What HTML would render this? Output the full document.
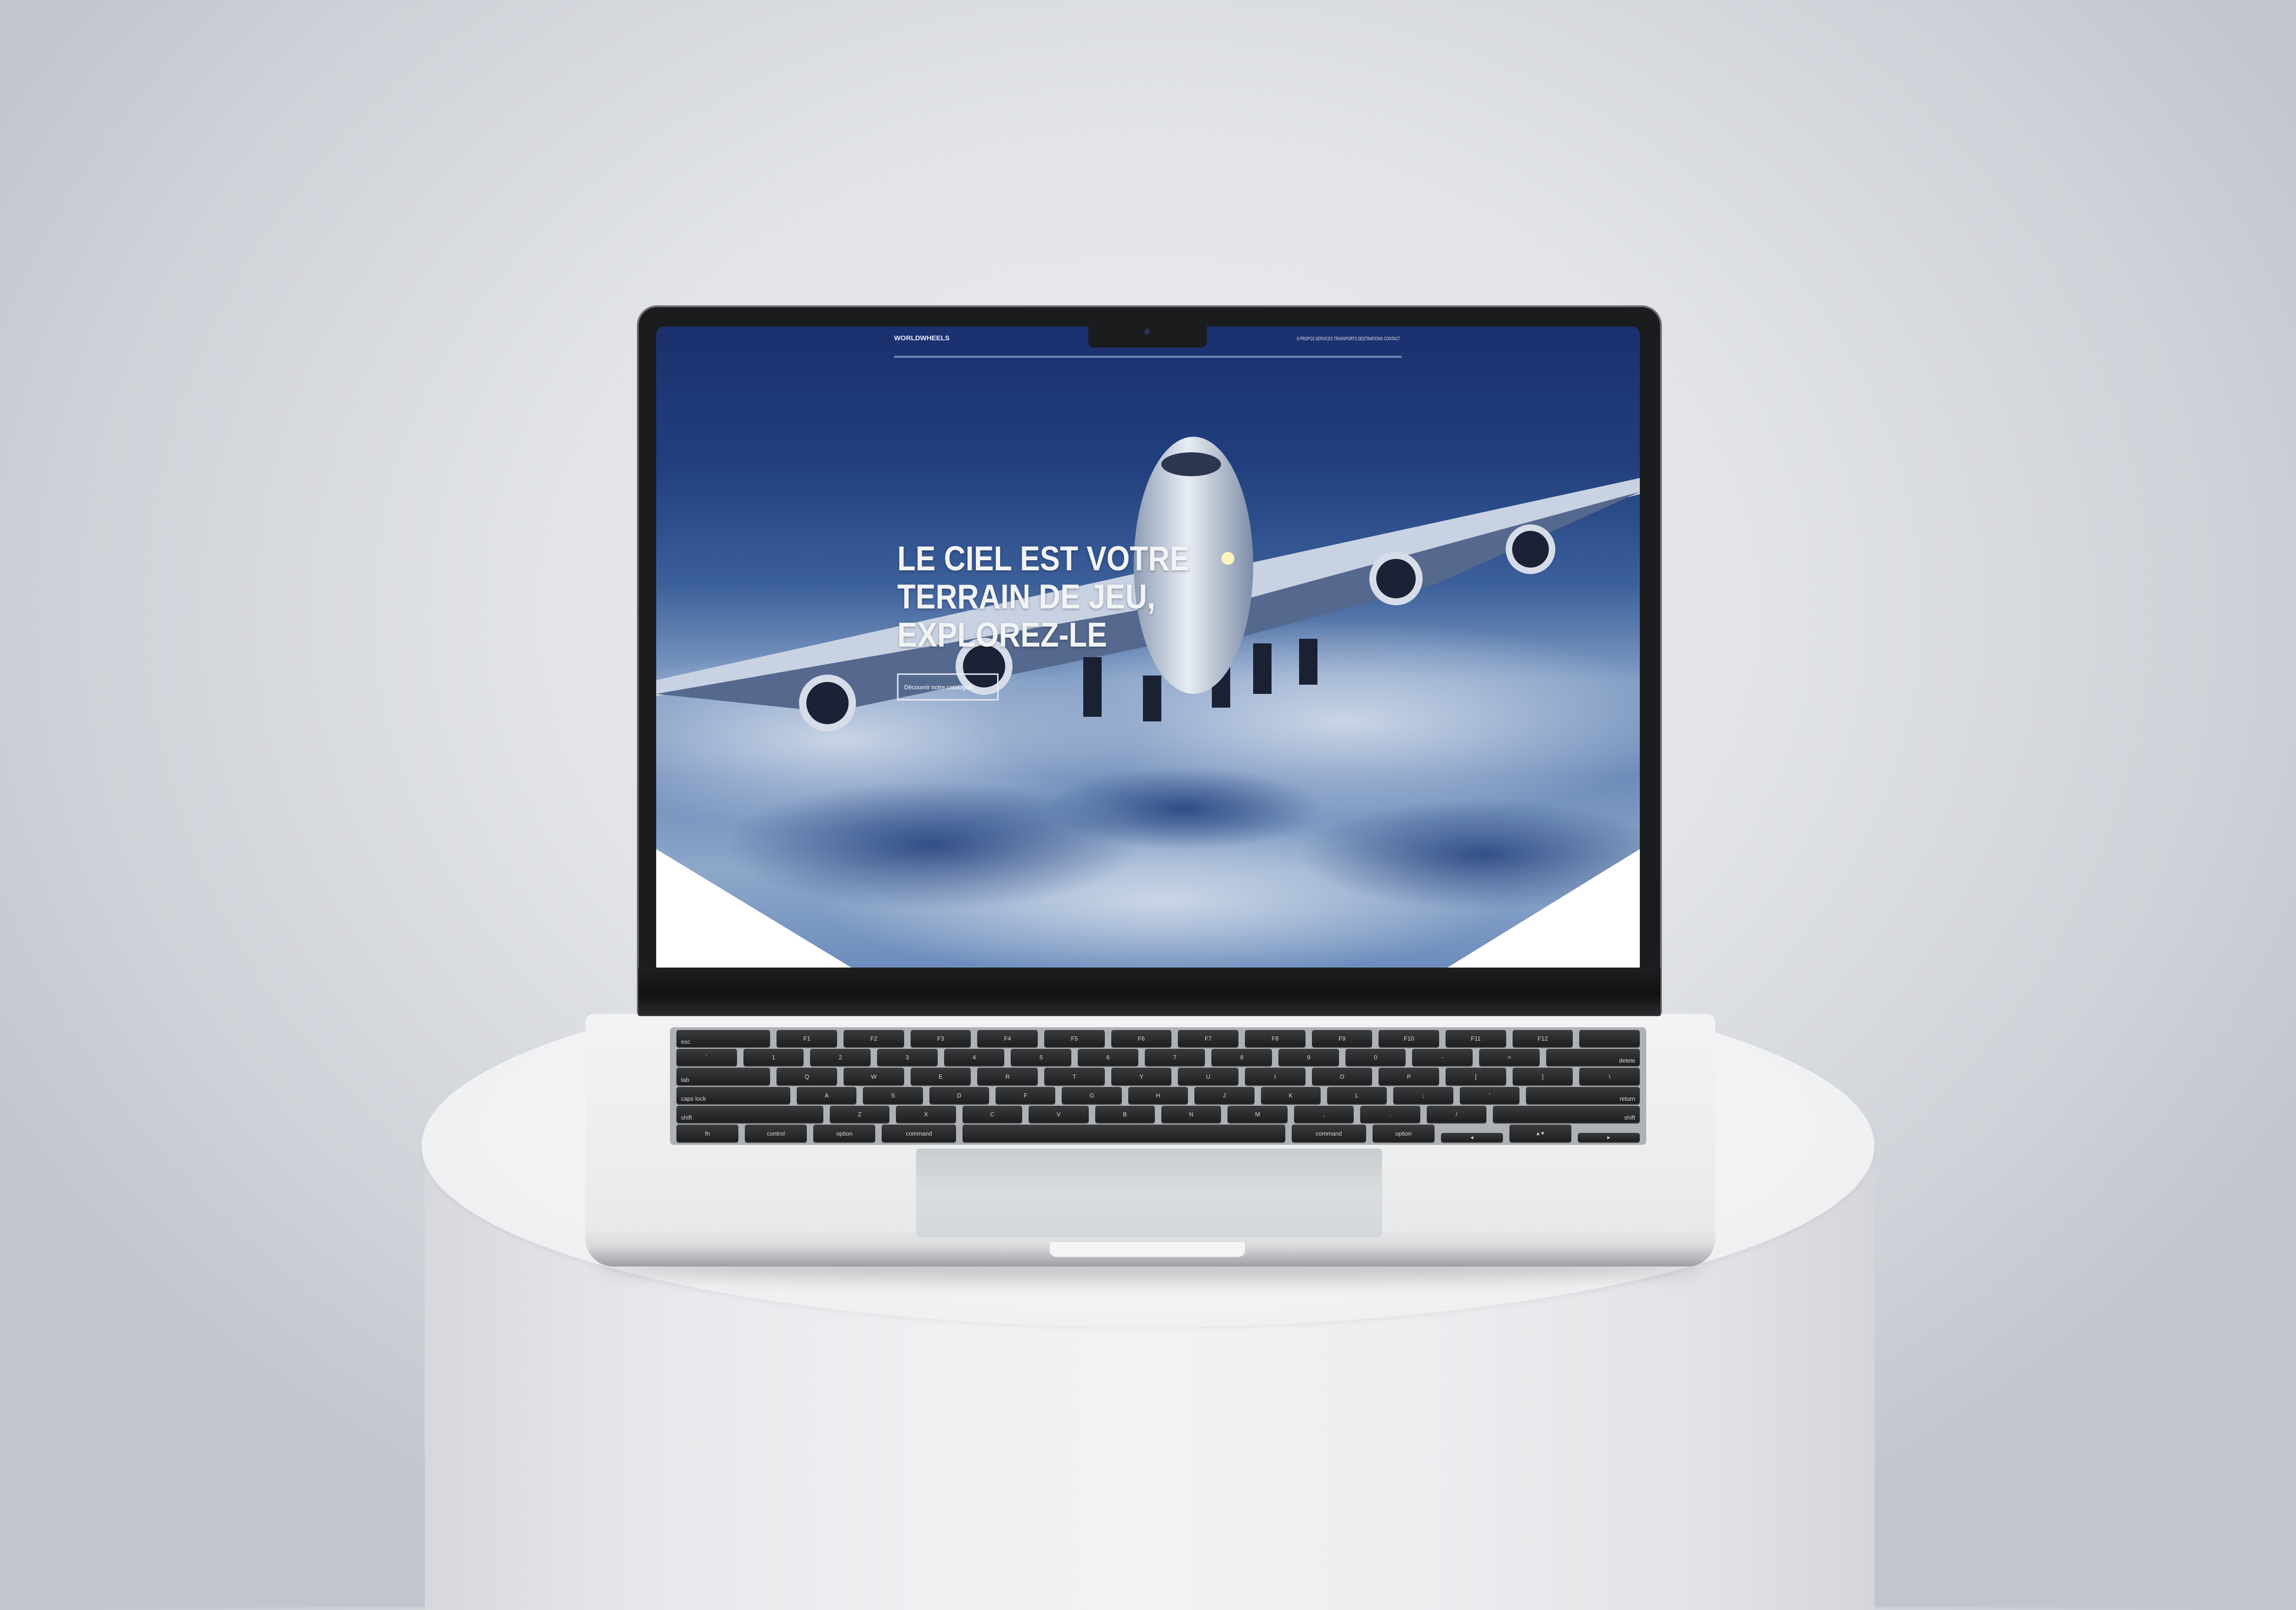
<!DOCTYPE html>
<html><head><meta charset="utf-8">
<style>
*{margin:0;padding:0;box-sizing:border-box}
body{width:5000px;height:3500px;overflow:hidden;position:relative;background:radial-gradient(ellipse 2900px 2300px at 50% 38%,#eceef1 0%,#e2e4e8 45%,#cfd2d8 80%,#c2c5cc 100%);font-family:"Liberation Sans",sans-serif}
.abs{position:absolute}
.ped{left:925px;top:2496px;width:3157px;height:1010px;background:linear-gradient(90deg,#d6d8dd 0%,#e6e8eb 15%,#eff0f2 35%,#f1f2f4 50%,#eceef0 68%,#e1e3e6 88%,#d4d6db 100%)}
.pedtop{left:918px;top:2100px;width:3164px;height:790px;border-radius:50%;background:radial-gradient(ellipse at 50% 45%,#f7f8f9 0%,#f2f3f5 55%,#eceef0 85%,#e4e6e9 100%);box-shadow:0 6px 10px rgba(0,0,0,.04)}
.lid{left:1387px;top:665px;width:2232px;height:1548px;border-radius:44px 44px 10px 10px;background:#1b1c1e;border:4px solid #6a6c70}
.screen{left:1429px;top:711px;width:2142px;height:1396px;overflow:hidden;border-radius:18px 18px 0 0;background:linear-gradient(180deg,#1b2f6e 0%,#22407e 22%,#3b5f9a 40%,#7f9bc3 55%,#6d8bb9 70%,#8ea8ca 85%,#6c8cbc 100%)}
.hinge{left:1390px;top:2107px;width:2226px;height:105px;background:linear-gradient(180deg,#1e1f21 0%,#111 55%,#2b2c2e 100%)}
.base{left:1275px;top:2208px;width:2460px;height:550px;border-radius:18px 18px 60px 60px;background:linear-gradient(180deg,#f2f3f4 0%,#eceded 60%,#e8e9eb 85%,#d9dadc 92%,#9c9ea2 100%)}
.well{left:1459px;top:2237px;width:2126px;height:256px;border-radius:8px;background:#aeb1b5;padding:6px 14px;display:flex;flex-direction:column;gap:4px}
.row{display:flex;gap:14px;height:38px}
.k{flex:1;background:linear-gradient(180deg,#3a3b3d,#1d1e20);border-radius:5px;color:#d8d8d8;font-size:13px;display:flex;align-items:center;justify-content:center;box-shadow:0 2px 0 #555}
.k.l{justify-content:flex-start;align-items:flex-end;padding:0 10px 4px}
.k.r{justify-content:flex-end;align-items:flex-end;padding:0 10px 4px}
.pad{left:1995px;top:2501px;width:1015px;height:193px;border-radius:8px;background:linear-gradient(180deg,#c8cbcf,#dadde0 50%,#d4d7da);}
.notch2{left:2286px;top:2705px;width:425px;height:32px;border-radius:0 0 14px 14px;background:#f4f5f6}
.h{left:1954px;top:1175px;color:#f2f3f6;font-weight:bold;font-size:75px;line-height:83px;transform:scaleX(0.87);transform-origin:left top;white-space:nowrap;text-shadow:0 2px 6px rgba(0,0,0,.3)}
</style></head><body>
<div class="abs ped"></div>
<div class="abs pedtop"></div>
<div class="abs" style="left:1300px;top:2730px;width:2410px;height:60px;border-radius:50%;background:rgba(0,0,0,.18);filter:blur(18px)"></div>
<div class="abs base"></div>
<div class="abs well">
<div class="row"><div class="k l" style="flex:1.4">esc</div><div class="k">F1</div><div class="k">F2</div><div class="k">F3</div><div class="k">F4</div><div class="k">F5</div><div class="k">F6</div><div class="k">F7</div><div class="k">F8</div><div class="k">F9</div><div class="k">F10</div><div class="k">F11</div><div class="k">F12</div><div class="k"></div></div>
<div class="row"><div class="k">`</div><div class="k">1</div><div class="k">2</div><div class="k">3</div><div class="k">4</div><div class="k">5</div><div class="k">6</div><div class="k">7</div><div class="k">8</div><div class="k">9</div><div class="k">0</div><div class="k">-</div><div class="k">=</div><div class="k r" style="flex:1.4">delete</div></div>
<div class="row"><div class="k l" style="flex:1.4">tab</div><div class="k">Q</div><div class="k">W</div><div class="k">E</div><div class="k">R</div><div class="k">T</div><div class="k">Y</div><div class="k">U</div><div class="k">I</div><div class="k">O</div><div class="k">P</div><div class="k">[</div><div class="k">]</div><div class="k">\</div></div>
<div class="row"><div class="k l" style="flex:1.75">caps lock</div><div class="k">A</div><div class="k">S</div><div class="k">D</div><div class="k">F</div><div class="k">G</div><div class="k">H</div><div class="k">J</div><div class="k">K</div><div class="k">L</div><div class="k">;</div><div class="k">'</div><div class="k r" style="flex:1.75">return</div></div>
<div class="row"><div class="k l" style="flex:2.3">shift</div><div class="k">Z</div><div class="k">X</div><div class="k">C</div><div class="k">V</div><div class="k">B</div><div class="k">N</div><div class="k">M</div><div class="k">,</div><div class="k">.</div><div class="k">/</div><div class="k r" style="flex:2.3">shift</div></div>
<div class="row"><div class="k">fn</div><div class="k">control</div><div class="k">option</div><div class="k" style="flex:1.2">command</div><div class="k" style="flex:5.2"></div><div class="k" style="flex:1.2">command</div><div class="k">option</div><div class="k" style="height:20px;margin-top:18px">◂</div><div class="k">▴ ▾</div><div class="k" style="height:20px;margin-top:18px">▸</div></div>
</div>
<div class="abs pad"></div>
<div class="abs notch2"></div>
<div class="abs lid"></div>
<div class="abs hinge"></div>
<div class="abs screen">
<svg width="2142" height="1396" viewBox="0 0 2142 1396" style="position:absolute;left:0;top:0">
<defs>
<radialGradient id="c1" cx="50%" cy="50%" r="50%"><stop offset="0" stop-color="#d3dceb" stop-opacity=".9"/><stop offset="1" stop-color="#d3dceb" stop-opacity="0"/></radialGradient>
<radialGradient id="c2" cx="50%" cy="50%" r="50%"><stop offset="0" stop-color="#1f3a78" stop-opacity=".8"/><stop offset="1" stop-color="#1f3a78" stop-opacity="0"/></radialGradient>
<linearGradient id="fus" x1="0" x2="1"><stop offset="0" stop-color="#8e9db5"/><stop offset=".45" stop-color="#e8edf3"/><stop offset="1" stop-color="#7e8ea8"/></linearGradient>
</defs>
<ellipse cx="400" cy="900" rx="650" ry="200" fill="url(#c1)"/>
<ellipse cx="1500" cy="860" rx="750" ry="220" fill="url(#c1)"/>
<ellipse cx="1100" cy="1250" rx="750" ry="170" fill="url(#c1)"/>
<ellipse cx="1800" cy="1150" rx="400" ry="120" fill="url(#c2)"/>
<ellipse cx="600" cy="1130" rx="450" ry="140" fill="url(#c2)"/>
<ellipse cx="1150" cy="1050" rx="300" ry="90" fill="url(#c2)"/>
<polygon points="0,770 1080,530 1150,600 0,805" fill="#c8d2e2"/>
<polygon points="0,800 1150,600 1150,680 380,840" fill="#55698f"/>
<polygon points="2142,330 1270,520 1260,600 2142,365" fill="#c8d2e2"/>
<polygon points="2142,360 1260,600 1260,680 1700,560" fill="#55698f"/>
<g fill="#1a2133">
<rect x="930" y="720" width="40" height="130"/><rect x="1060" y="760" width="40" height="100"/><rect x="1210" y="740" width="40" height="90"/><rect x="1300" y="690" width="40" height="110"/><rect x="1400" y="680" width="40" height="100"/>
</g>
<ellipse cx="1170" cy="520" rx="130" ry="280" fill="url(#fus)"/>
<ellipse cx="1165" cy="300" rx="65" ry="26" fill="#2c3650"/>
<g fill="#d6dde8"><circle cx="373" cy="820" r="62"/><circle cx="714" cy="740" r="62"/><circle cx="1611" cy="549" r="58"/><circle cx="1904" cy="485" r="54"/></g>
<g fill="#1b2235"><circle cx="373" cy="820" r="46"/><circle cx="714" cy="740" r="46"/><circle cx="1611" cy="549" r="43"/><circle cx="1904" cy="485" r="40"/></g>
<circle cx="1245" cy="505" r="14" fill="#fff4c0"/>
<line x1="518" y1="66" x2="1623" y2="66" stroke="#6a7fb0" stroke-width="5"/>
<text x="518" y="30" fill="#e8ecf5" font-size="15" font-weight="bold" font-family="Liberation Sans">WORLDWHEELS</text>
<text x="1395" y="30" fill="#dfe5f2" font-size="11" font-family="Liberation Sans" textLength="225" lengthAdjust="spacingAndGlyphs">À PROPOS   SERVICES   TRANSPORTS   DESTINATIONS   CONTACT</text>
<rect x="526" y="757" width="218" height="56" fill="none" stroke="#e8ecf4" stroke-width="3"/>
<text x="540" y="790" fill="#fff" font-size="13" font-family="Liberation Sans">Découvrir notre catalogue</text>
<polygon points="0,1138 0,1396 425,1396" fill="#fff"/>
<polygon points="2142,1138 2142,1396 1723,1396" fill="#fff"/>
</svg>
</div>
<div class="abs" style="left:2370px;top:711px;width:258px;height:46px;background:#1b1c1e;border-radius:0 0 12px 12px"></div>
<div class="abs" style="left:2492px;top:716px;width:12px;height:12px;border-radius:50%;background:#2a3552"></div>
<div class="abs h">LE CIEL EST VOTRE<br>TERRAIN DE JEU,<br>EXPLOREZ-LE</div>
</body></html>
